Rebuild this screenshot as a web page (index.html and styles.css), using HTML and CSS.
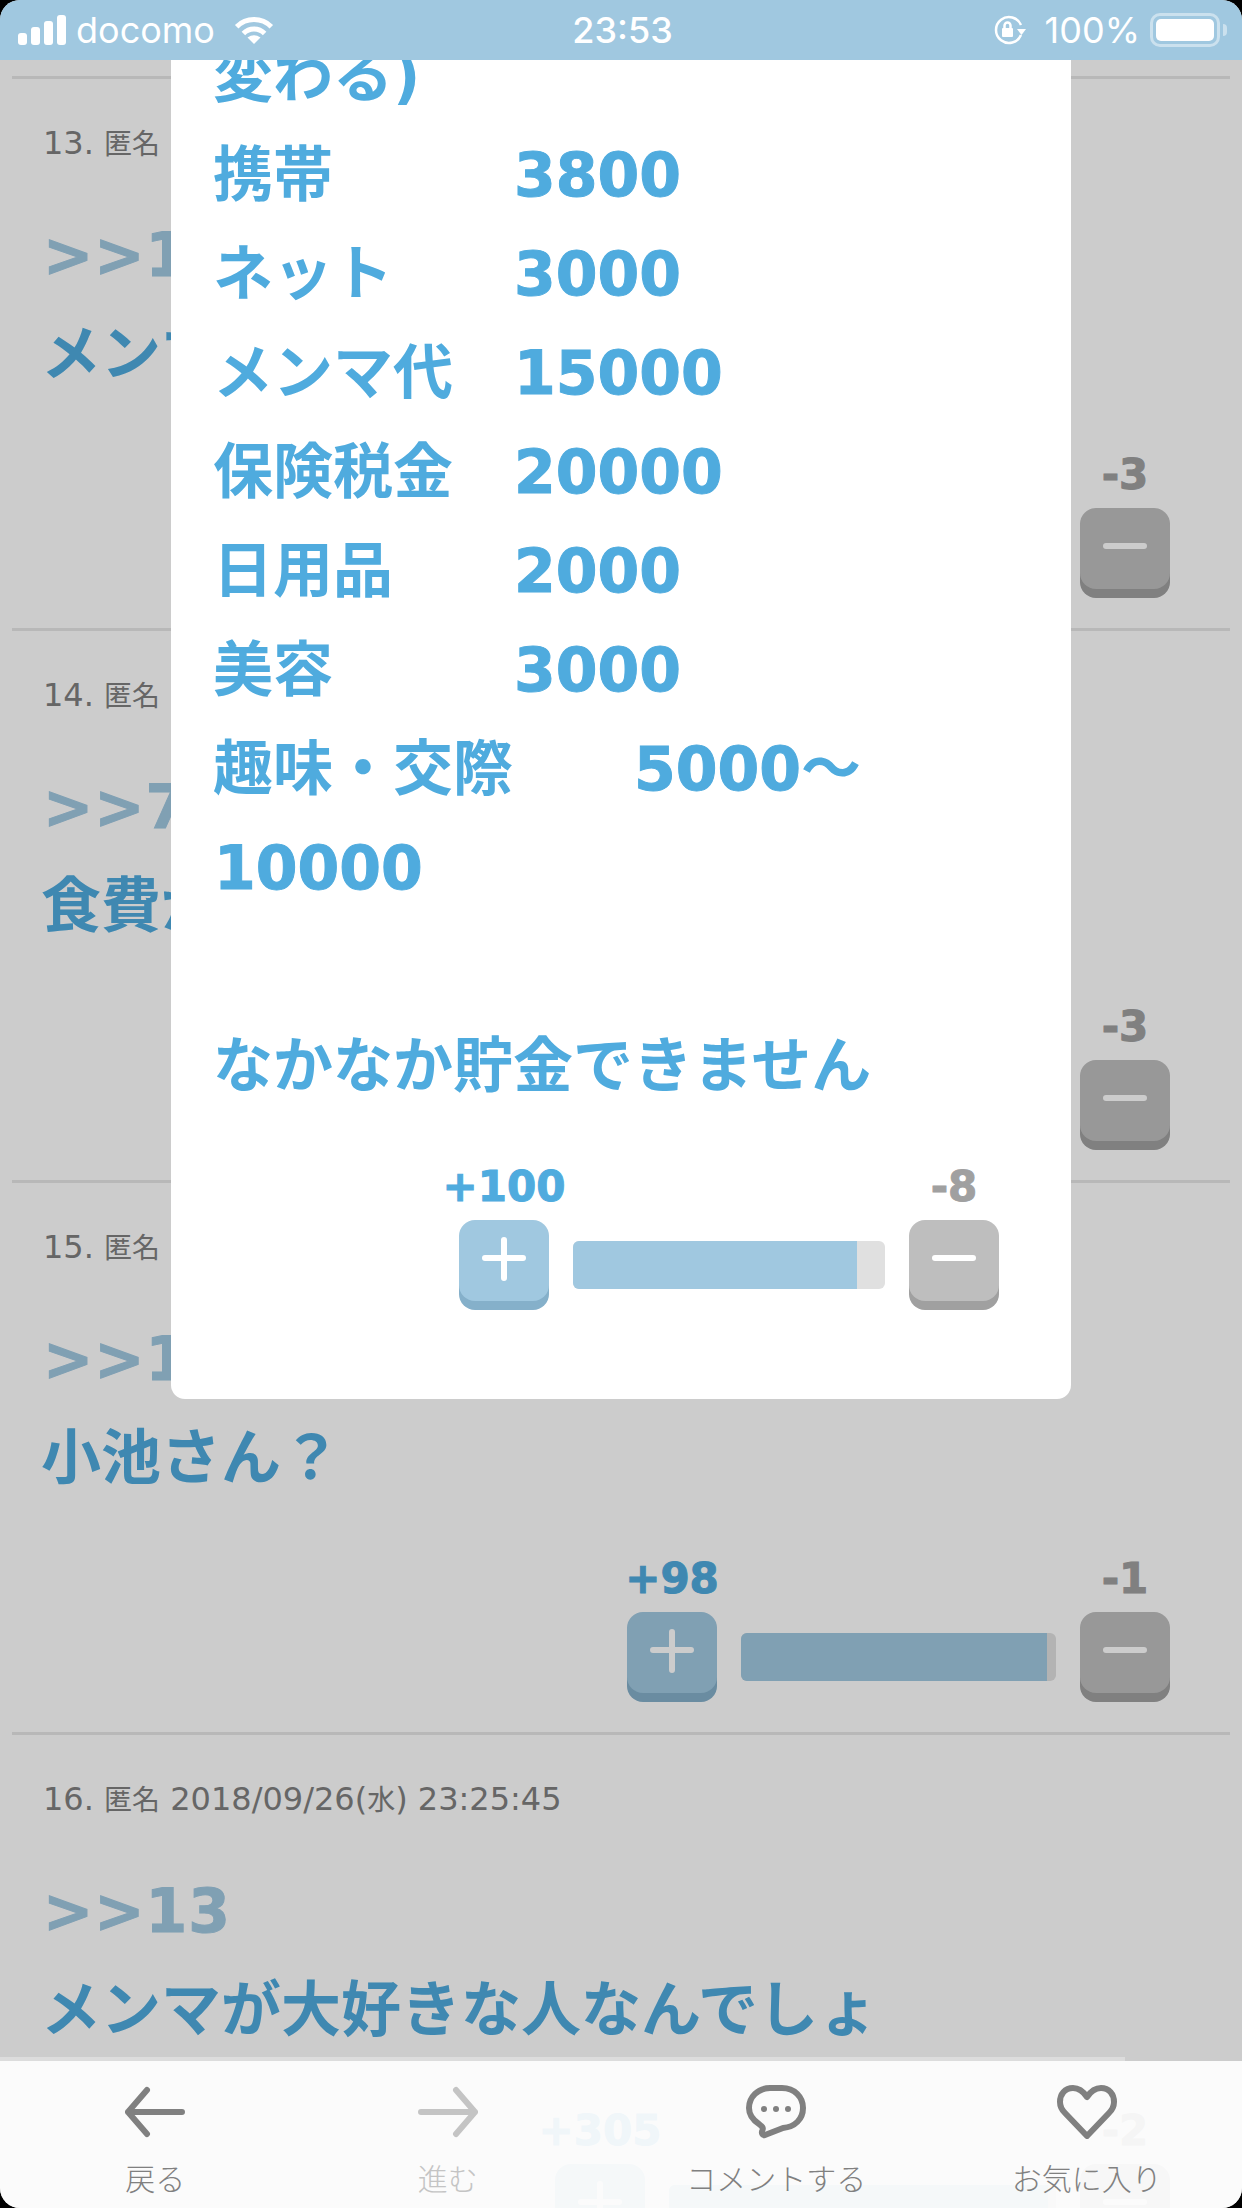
FILE: index.html
```html
<!DOCTYPE html>
<html lang="ja">
<head>
  <meta charset="UTF-8" />
  <meta name="viewport" content="width=device-width, initial-scale=1.0"/>
  <title>コメント</title>
  <link rel="stylesheet" href="styles.css">
</head>
<body>

  <div class="screen">

    <!-- Comment list, behind the overlay -->
    <div class="thread">

      <div class="post">
        <p class="meta">13. <span class="name">匿名</span> 2018/09/26(水) 23:19:02</p>
        <p class="anchor">&gt;&gt;12</p>
        <p class="comment">メンマ代</p>
        <div class="votes">
          <div class="vote"><span class="count plus">+40</span><button class="vote-btn plus"><svg viewBox="0 0 44 44"><path d="M22 3V41M3 21H41"/></svg></button></div>
          <div class="bar" style="width:315px"><div class="bar-fill" style="width:93%"></div></div>
          <div class="vote"><span class="count minus">-3</span><button class="vote-btn minus"><svg viewBox="0 0 44 44"><path d="M3 21H41"/></svg></button></div>
        </div>
      </div>

      <div class="post">
        <p class="meta">14. <span class="name">匿名</span> 2018/09/26(水) 23:21:37</p>
        <p class="anchor">&gt;&gt;7</p>
        <p class="comment">食費が入ってない</p>
        <div class="votes">
          <div class="vote"><span class="count plus">+52</span><button class="vote-btn plus"><svg viewBox="0 0 44 44"><path d="M22 3V41M3 21H41"/></svg></button></div>
          <div class="bar" style="width:315px"><div class="bar-fill" style="width:94%"></div></div>
          <div class="vote"><span class="count minus">-3</span><button class="vote-btn minus"><svg viewBox="0 0 44 44"><path d="M3 21H41"/></svg></button></div>
        </div>
      </div>

      <div class="post">
        <p class="meta">15. <span class="name">匿名</span> 2018/09/26(水) 23:24:11</p>
        <p class="anchor">&gt;&gt;13</p>
        <p class="comment">小池さん？</p>
        <div class="votes">
          <div class="vote"><span class="count plus">+98</span><button class="vote-btn plus"><svg viewBox="0 0 44 44"><path d="M22 3V41M3 21H41"/></svg></button></div>
          <div class="bar" style="width:315px"><div class="bar-fill" style="width:97%"></div></div>
          <div class="vote"><span class="count minus">-1</span><button class="vote-btn minus"><svg viewBox="0 0 44 44"><path d="M3 21H41"/></svg></button></div>
        </div>
      </div>

      <div class="post">
        <p class="meta">16. <span class="name">匿名</span> 2018/09/26(<span class="name">水</span>) 23:25:45</p>
        <p class="anchor">&gt;&gt;13</p>
        <p class="comment">メンマが大好きな人なんでしょ</p>
        <div class="votes">
          <div class="vote"><span class="count plus">+305</span><button class="vote-btn plus"><svg viewBox="0 0 44 44"><path d="M22 3V41M3 21H41"/></svg></button></div>
          <div class="bar" style="width:387px"><div class="bar-fill" style="width:98%"></div></div>
          <div class="vote"><span class="count minus">-2</span><button class="vote-btn minus"><svg viewBox="0 0 44 44"><path d="M3 21H41"/></svg></button></div>
        </div>
      </div>

    </div>

    <div class="overlay"></div>

    <!-- Popup with the expanded comment -->
    <div class="modal">
      <p class="modal-text">変わる)<br>携帯　　　<b>3800</b><br>ネット　　<b>3000</b><br>メンマ代　<b>15000</b><br>保険税金　<b>20000</b><br>日用品　　<b>2000</b><br>美容　　　<b>3000</b><br>趣味・交際　　<b>5000</b>～<b>10000</b><br><br>なかなか貯金できません</p>
      <div class="votes">
        <div class="vote"><span class="count plus">+100</span><button class="vote-btn plus"><svg viewBox="0 0 44 44"><path d="M22 3V41M3 21H41"/></svg></button></div>
        <div class="bar" style="width:312px"><div class="bar-fill" style="width:91%"></div></div>
        <div class="vote"><span class="count minus">-8</span><button class="vote-btn minus"><svg viewBox="0 0 44 44"><path d="M3 21H41"/></svg></button></div>
      </div>
    </div>

    <!-- iOS status bar -->
    <div class="status-bar">
      <div class="status-left">
        <div class="signal"><i></i><i></i><i></i><i></i></div>
        <span>docomo</span>
        <svg class="wifi" viewBox="0 0 42 28">
          <path class="wifi-arc" d="M3.7 10.7A24.5 24.5 0 0 1 38.3 10.7"/>
          <path class="wifi-arc" d="M10.4 17.4A15 15 0 0 1 31.6 17.4"/>
          <path class="wifi-dot" d="M21 28L14.5 21.5Q21 17 27.5 21.5Z"/>
        </svg>
      </div>
      <div class="status-time">23:53</div>
      <div class="status-right">
        <svg class="rotation" viewBox="0 0 34 30">
          <path class="rotation-arc" d="M28 20A13 13 0 1 1 28 10"/>
          <path class="rotation-head" d="M24 14H33L28.500 20Z"/>
          <rect class="rotation-head" x="9" y="13" width="11" height="9" rx="1"/>
          <path class="rotation-lock" d="M11.500 13V10.500A3 3 0 0 1 17.500 10.500V13"/>
        </svg>
        <span>100%</span>
        <div class="battery"><div class="battery-level"></div></div>
        <div class="battery-tip"></div>
      </div>
    </div>

    <!-- Bottom toolbar -->
    <div class="toolbar">
      <div class="load-line"></div>
      <div class="tool">
        <svg class="tool-icon" viewBox="0 0 60 54"><path d="M57 27H3M22 5L3 27L22 49"/></svg>
        <span>戻る</span>
      </div>
      <div class="tool tool-off">
        <svg class="tool-icon" viewBox="0 0 60 54"><path d="M3 27H57M38 5L57 27L38 49"/></svg>
        <span>進む</span>
      </div>
      <div class="tool">
        <svg class="tool-icon" viewBox="0 0 60 54">
          <path d="M24 3H36C48.500 3 57 12 57 23C57 34 49 42 37 43L19 50C16.500 51 15 48 16.500 45C17.500 42.500 16 41.500 13 39C7 35 3 30 3 23C3 12 12 3 24 3Z"/>
          <circle class="dot" cx="18" cy="24" r="3"/><circle class="dot" cx="30" cy="24" r="3"/><circle class="dot" cx="42" cy="24" r="3"/>
        </svg>
        <span>コメントする</span>
      </div>
      <div class="tool">
        <svg class="tool-icon" viewBox="0 0 60 54"><path d="M30 12C26 6 21 3 16 3C8 3 3 9 3 17C3 22 5 25 8 28L30 51L52 28C55 25 57 22 57 17C57 9 52 3 44 3C39 3 34 6 30 12Z"/></svg>
        <span>お気に入り</span>
      </div>
    </div>

  </div>

</body>
</html>
```

FILE: styles.css
```css
/* Minimal Reset */
* {
  margin: 0;
  padding: 0;
  box-sizing: border-box;
}

body {
  background: #000;
  font-family: "DejaVu Sans", "Noto Sans CJK JP", sans-serif;
}

/* Phone screen with rounded corners */
.screen {
  position: relative;
  width: 1242px;
  height: 2208px;
  overflow: hidden;
  border-radius: 20px;
  background: #fff;
}

/* Comment list */
.thread {
  margin: 0 12px;
  padding-top: 76px;
}
.post {
  border-top: 3px solid #e6e6e6;
  padding: 42px 60px 30px 31px;
  height: 552px;
}
.meta {
  height: 44px; /* mixed font sizes would grow the line */
  font-size: 32px;
  line-height: 44px;
  color: #808080;
  white-space: nowrap;
}
.meta .name {
  font-size: 28px;
}
.anchor {
  margin-top: 41px;
  font-size: 60px;
  font-weight: bold;
  line-height: 99px;
  letter-spacing: 1px;
  color: #a0c8e0;
  -webkit-text-stroke: 1px currentColor;
}
.comment {
  margin-left: -2px;
  font-size: 60px;
  font-weight: bold;
  line-height: 99px;
  color: #4fabde;
}
.post .votes {
  margin-top: 46px;
}

/* Vote row */
.votes {
  display: flex;
  justify-content: flex-end;
  align-items: flex-end;
  gap: 24px;
}
.vote {
  display: flex;
  flex-direction: column;
  align-items: center;
  gap: 8px;
  width: 90px;
  white-space: nowrap;
}
.count {
  font-size: 42px;
  font-weight: bold;
  line-height: 50px;
  -webkit-text-stroke: 1px currentColor;
}
.count.plus {
  color: #4fabde;
}
.count.minus {
  color: #a0a0a0;
}
.vote-btn {
  display: flex;
  align-items: center;
  justify-content: center;
  width: 90px;
  height: 81px;
  margin-bottom: 9px;
  padding-bottom: 3px;
  border: none;
  border-radius: 16px;
}
.vote-btn svg {
  width: 44px;
  height: 44px;
  fill: none;
  stroke: #fff;
  stroke-width: 6;
  stroke-linecap: round;
}
.vote-btn.plus {
  background: #a0c8e0;
  box-shadow: 0 9px 0 #85b0ca;
}
.vote-btn.minus {
  background: #bebebe;
  box-shadow: 0 9px 0 #a0a0a0;
}
.bar {
  height: 48px;
  margin-bottom: 21px;
  border-radius: 6px;
  overflow: hidden;
  background: #e0e0e0;
}
.bar-fill {
  height: 100%;
  background: #a0c8e0;
}

/* Grey layer over the list */
.overlay {
  position: absolute;
  top: 0;
  left: 0;
  right: 0;
  bottom: 0;
  background: rgba(0, 0, 0, 0.2);
}

/* Popup */
.modal {
  position: absolute;
  top: 60px;
  left: 171px;
  width: 900px;
  height: 1339px;
  overflow: hidden;
  padding: 0 72px 0 42px;
  background: #fff;
  border-radius: 0 0 14px 14px;
}
.modal-text {
  margin-top: -33px;
  margin-bottom: 46px;
  font-size: 60px;
  font-weight: bold;
  line-height: 99px;
  color: #4fabde;
}
.modal-text b {
  margin-left: 1px;
  -webkit-text-stroke: 1px currentColor;
}

/* Status bar */
.status-bar {
  position: absolute;
  top: 0;
  left: 0;
  right: 0;
  display: grid;
  grid-template-columns: 1fr auto 1fr;
  align-items: center;
  height: 60px;
  padding: 0 15px 0 18px;
  background: #a0c8e0;
  color: #fff;
  font-family: Inter, Roboto, sans-serif;
  font-size: 36px;
}
.status-left,
.status-right {
  display: flex;
  align-items: center;
}
.status-right {
  justify-content: flex-end;
}
.status-time {
  font-weight: 500;
}
.signal {
  display: flex;
  align-items: flex-end;
  gap: 4px;
  height: 30px;
  margin-right: 10px;
}
.signal i {
  display: block;
  width: 9px;
  border-radius: 3px;
  background: #fff;
}
.signal i:nth-child(1) { height: 12px; }
.signal i:nth-child(2) { height: 18px; }
.signal i:nth-child(3) { height: 24px; }
.signal i:nth-child(4) { height: 30px; }
.wifi {
  width: 42px;
  height: 28px;
  margin-left: 18px;
}
.wifi-arc {
  fill: none;
  stroke: #fff;
  stroke-width: 5;
}
.wifi-dot {
  fill: #fff;
}
.rotation {
  width: 34px;
  height: 30px;
  margin-right: 18px;
}
.rotation-arc,
.rotation-lock {
  fill: none;
  stroke: #fff;
  stroke-width: 2.5;
}
.rotation-head {
  fill: #fff;
}
.battery {
  width: 70px;
  height: 34px;
  margin-left: 10px;
  padding: 3px;
  border: 3px solid rgba(255, 255, 255, 0.45);
  border-radius: 10px;
}
.battery-level {
  width: 100%;
  height: 100%;
  border-radius: 5px;
  background: #fff;
}
.battery-tip {
  width: 4px;
  height: 12px;
  margin-left: 3px;
  border-radius: 0 4px 4px 0;
  background: rgba(255, 255, 255, 0.45);
}

/* Bottom toolbar */
.toolbar {
  position: absolute;
  left: 0;
  right: 0;
  bottom: 0;
  display: grid;
  grid-template-columns: repeat(4, 1fr);
  height: 147px;
  padding-top: 24px;
  background: rgba(255, 255, 255, 0.92);
}
.load-line {
  position: absolute;
  top: -4px;
  left: 0;
  width: 1125px;
  height: 4px;
  background: #dcdcdc;
}
.tool {
  display: flex;
  flex-direction: column;
  align-items: center;
  gap: 16px;
  font-family: "Noto Sans CJK JP", sans-serif;
  font-size: 30px;
  font-weight: 300;
  line-height: 44px;
  color: #808080;
}
.tool-off {
  padding-right: 36px;
  color: #c4c4c4;
}
.tool-icon {
  width: 60px;
  height: 54px;
  fill: none;
  stroke: currentColor;
  stroke-width: 6;
  stroke-linecap: round;
  stroke-linejoin: round;
}
.tool-icon .dot {
  fill: currentColor;
  stroke: none;
}
```
